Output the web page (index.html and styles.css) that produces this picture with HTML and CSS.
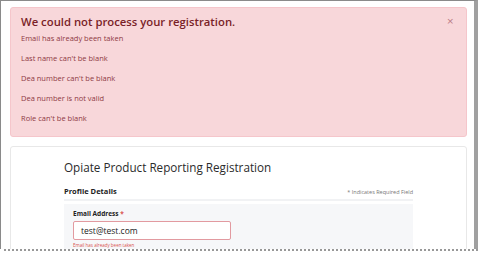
FILE: index.html
```html
<!DOCTYPE html>
<html lang="en">
<head>
    <meta charset="UTF-8">
    <title>Registration Errors</title>
    <link rel="stylesheet" href="styles.css">
</head>
<body>
    <div class="frame">
        <div class="alert">
            <button class="close">&times;</button>
            <h2>We could not process your registration.</h2>
            <p>Email has already been taken</p>
            <p>Last name can't be blank</p>
            <p>Dea number can't be blank</p>
            <p>Dea number is not valid</p>
            <p>Role can't be blank</p>
        </div>

        <div class="card">
            <h1>Opiate Product Reporting Registration</h1>
            <div class="section-head">
                <h3>Profile Details</h3>
                <span class="note">* Indicates Required Field</span>
            </div>
            <div class="field-box">
                <label>Email Address <span class="req">*</span></label>
                <div class="input">test@test.com</div>
                <div class="field-error">Email has already been taken</div>
            </div>
        </div>
    </div>
    <div class="tear"></div>
</body>
</html>
```

FILE: styles.css
```css
* {
    margin: 0;
    padding: 0;
    box-sizing: border-box;
}

body {
    background: white;
    font-family: 'Open Sans', 'Noto Sans', sans-serif;
    color: #333;
}

.frame {
    width: 478px;
    height: 249px;
    border-top: 1px solid #8a8a8a;
    border-left: 1px solid #8a8a8a;
    border-right: 4px solid #a0a0a0;
    padding: 6px 7px 0 9px;
    overflow: hidden;
}

.alert {
    position: relative;
    background: #f8d7da;
    border: 1px solid #f5c6cb;
    border-radius: 3px;
    padding: 6px 10px 13px 10px;
    color: #842029;
}

.alert h2 {
    font-size: 11.3px;
    font-weight: 600;
    line-height: 16px;
    color: #7a1f28;
    margin-bottom: 3px;
}

.alert p {
    font-size: 7.5px;
    line-height: 10px;
    color: #8e3a44;
    margin-bottom: 10px;
}

.alert p:last-child {
    margin-bottom: 0;
}

.close {
    position: absolute;
    top: 9px;
    right: 12px;
    background: none;
    border: none;
    font-size: 9px;
    line-height: 9px;
    color: #b97a82;
    font-family: 'DejaVu Sans', sans-serif;
}

.card {
    margin-top: 9px;
    border: 1px solid #e8e8e8;
    border-radius: 3px;
    padding: 12px 53px 0 53px;
    height: 120px;
}

.card h1 {
    font-size: 11.7px;
    font-weight: 500;
    line-height: 16px;
    color: #2b2b2b;
    margin-bottom: 11px;
}

.section-head {
    display: flex;
    justify-content: space-between;
    align-items: baseline;
    line-height: 11px;
    padding-bottom: 1px;
    border-bottom: 2px solid #f1f2f4;
}

.section-head h3 {
    font-size: 7.5px;
    font-weight: 700;
    color: #222;
}

.note {
    font-size: 5.5px;
    color: #777;
}

.field-box {
    margin-top: 3px;
    background: #f6f7f9;
    padding: 5px 9px 0 9px;
    height: 60px;
}

.field-box label {
    display: block;
    font-size: 6.5px;
    line-height: 9px;
    font-weight: 700;
    color: #222;
    margin-bottom: 3px;
}

.req {
    color: #d9534f;
}

.input {
    width: 158px;
    height: 19px;
    background: white;
    border: 1px solid #e29aa0;
    border-radius: 2px;
    padding-left: 7px;
    font-size: 8.5px;
    font-weight: 500;
    line-height: 17px;
    color: #222;
}

.field-error {
    font-size: 4.5px;
    line-height: 6px;
    color: #d9534f;
    margin-top: 2px;
}

.tear {
    width: 474px;
    margin-left: 4px;
    height: 3px;
    border-top: 2px dotted #555;
    opacity: 0.6;
}
```
